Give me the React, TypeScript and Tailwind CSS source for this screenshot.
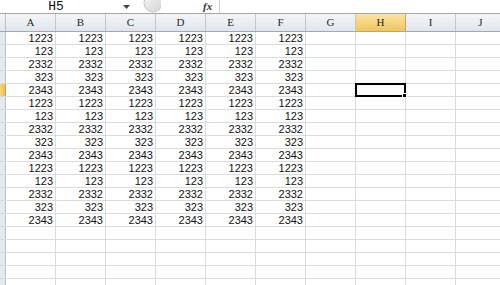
const cols = ["A", "B", "C", "D", "E", "F", "G", "H", "I", "J"];
const values = ["1223", "123", "2332", "323", "2343"];
const data = [...values, ...values, ...values];

const TopBar = () => (
  <div className="h-[14px] flex items-stretch border-b border-[#a5a5a5] bg-white overflow-hidden">
    <div className="w-[112px] flex items-center justify-center">
      <span className="text-[13px] leading-[13px] text-[#111] font-['Liberation_Mono',monospace]">H5</span>
    </div>
    <div className="w-[28px] flex items-center justify-center">
      <svg width="7" height="4" viewBox="0 0 7 4">
        <path d="M0 0h7L3.5 4z" fill="#444" />
      </svg>
    </div>
    <svg width="20" height="13" viewBox="0 0 20 13" className="ml-[1px]">
      <defs>
        <linearGradient id="g" x1="0" y1="0" x2="1" y2="1">
          <stop offset="0" stopColor="#f7f7f7" />
          <stop offset="1" stopColor="#d4d4d4" />
        </linearGradient>
      </defs>
      <circle cx="12" cy="3" r="9" fill="url(#g)" stroke="#c4c4c4" />
    </svg>
    <div className="w-[42px]" />
    <div className="w-[16px] flex items-center">
      <span className="text-[11px] leading-none italic font-bold text-[#333] font-['Liberation_Serif',serif]">fx</span>
    </div>
    <div className="w-[1px] bg-[#d0d0d0]" />
    <div className="flex-1" />
  </div>
);

const HeaderRow = () => (
  <div className="h-[18px] flex border-b border-[#9eaab8] bg-gradient-to-b from-[#f3f5f8] to-[#e2e6ec]">
    <div className="w-[6px] shrink-0 border-r border-[#b8c0ca]" />
    {cols.map((c) => (
      <div
        key={c}
        className={
          c === "H"
            ? "w-[50px] shrink-0 border-r border-[#c9a640] bg-gradient-to-b from-[#fbe4a3] to-[#f2c55c] flex items-center justify-center"
            : "w-[50px] shrink-0 border-r border-[#c3c8cf] flex items-center justify-center"
        }
      >
        <span className="text-[11px] leading-none text-[#2a2a2a] font-['Liberation_Serif',serif]">{c}</span>
      </div>
    ))}
  </div>
);

const Row = ({ value, index }: { value?: string; index: number }) => (
  <div className="h-[13px] flex border-b border-[#dadcdd]">
    <div
      className={
        index === 4
          ? "w-[6px] shrink-0 border-r border-[#c9a640] bg-gradient-to-r from-[#f8d77e] to-[#f0bd48]"
          : "w-[6px] shrink-0 border-r border-[#b8c0ca] bg-[#e6e9ee]"
      }
    />
    {cols.map((c, ci) => (
      <div
        key={c}
        className="relative w-[50px] shrink-0 border-r border-[#dadcdd] flex items-center justify-end pr-[2px]"
      >
        {value && ci < 6 && (
          <span className="text-[11px] leading-none text-[#111] font-['Liberation_Sans',Arial,sans-serif]">
            {value}
          </span>
        )}
        {index === 4 && c === "H" && (
          <div className="absolute -top-[1px] -left-[1px] w-[51px] h-[14px] border-2 border-black">
            <div className="absolute -right-[3px] -bottom-[3px] w-[5px] h-[5px] bg-black border border-white" />
          </div>
        )}
      </div>
    ))}
  </div>
);

export default function App() {
  const rows = Array.from({ length: 20 }, (_, i) => data[i]);
  return (
    <div className="w-[500px] h-[285px] overflow-hidden bg-white">
      <TopBar />
      <HeaderRow />
      {rows.map((v, i) => (
        <Row key={i} value={v} index={i} />
      ))}
    </div>
  );
}
